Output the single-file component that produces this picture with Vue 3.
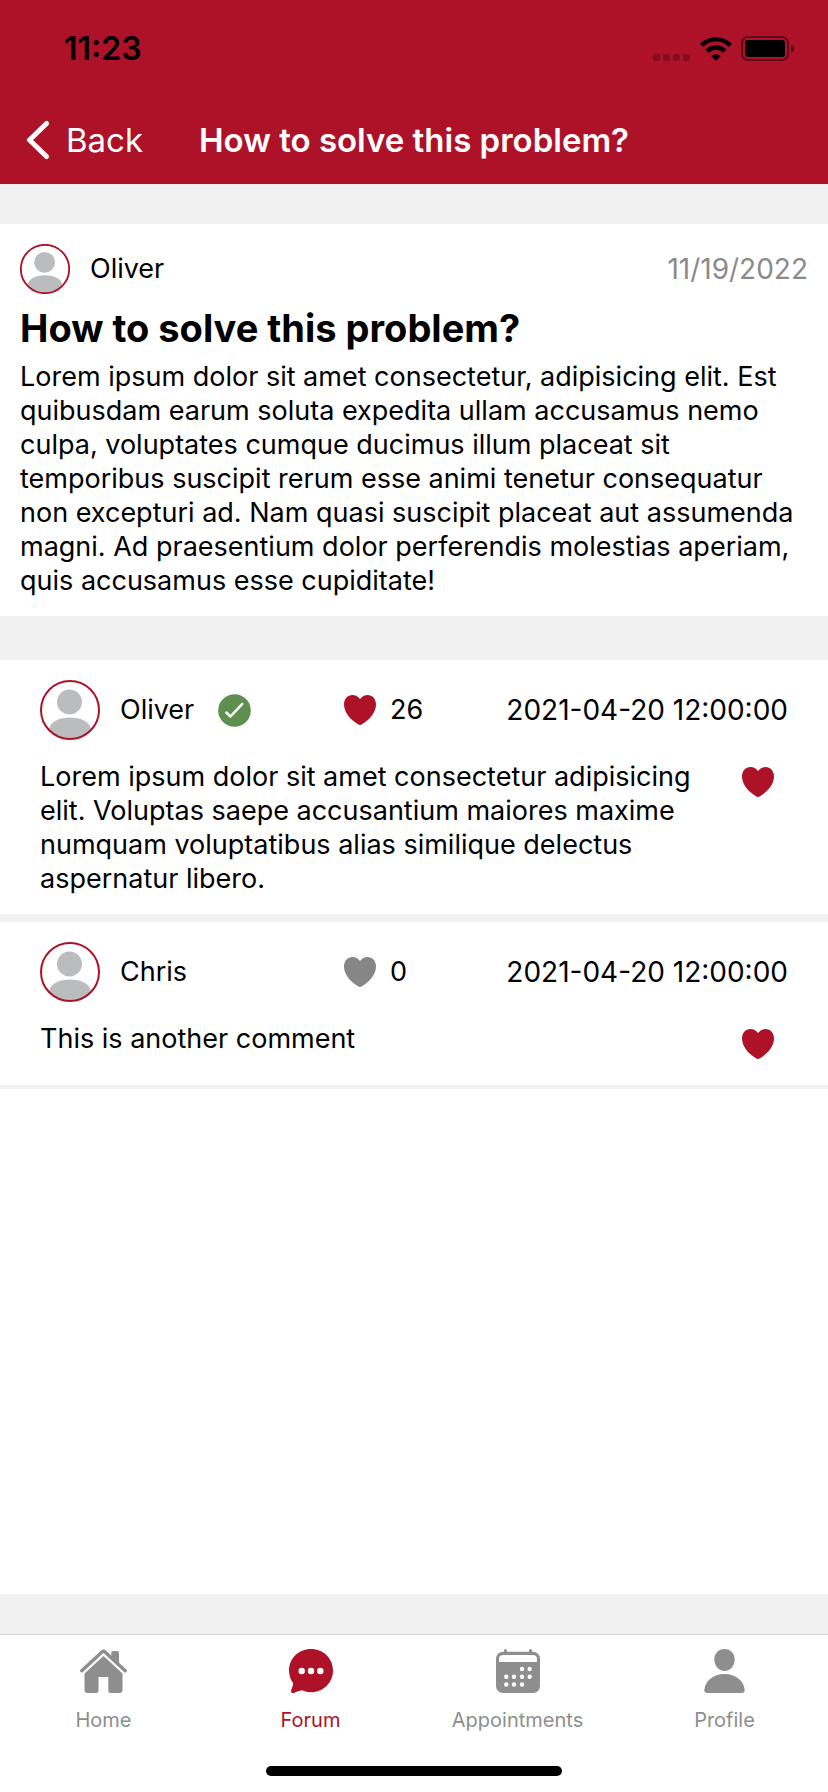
<script setup>
const post = {
  author: 'Oliver',
  date: '11/19/2022',
  title: 'How to solve this problem?',
  body: 'Lorem ipsum dolor sit amet consectetur, adipisicing elit. Est quibusdam earum soluta expedita ullam accusamus nemo culpa, voluptates cumque ducimus illum placeat sit temporibus suscipit rerum esse animi tenetur consequatur non excepturi ad. Nam quasi suscipit placeat aut assumenda magni. Ad praesentium dolor perferendis molestias aperiam, quis accusamus esse cupiditate!',
}

const comments = [
  {
    id: 1,
    author: 'Oliver',
    verified: true,
    likes: 26,
    date: '2021-04-20 12:00:00',
    text: 'Lorem ipsum dolor sit amet consectetur adipisicing elit. Voluptas saepe accusantium maiores maxime numquam voluptatibus alias similique delectus aspernatur libero.',
  },
  {
    id: 2,
    author: 'Chris',
    verified: false,
    likes: 0,
    date: '2021-04-20 12:00:00',
    text: 'This is another comment',
  },
]

const heart =
  'M16 4C14 1.5 11.5 0 8.5 0C3.5 0 0 4 0 9.5C0 18 7 25 14 29.3Q16 30.6 18 29.3C25 25 32 18 32 9.5C32 4 28.5 0 23.5 0C20.5 0 18 1.5 16 4Z'
</script>

<template>
  <div class="screen">
    <header class="top">
      <div class="status">
        <span class="time">11:23</span>
        <div class="indicators">
          <svg width="37" height="24" viewBox="0 0 37 24" aria-hidden="true">
            <g fill="#000" fill-opacity="0.25">
              <rect x="0" y="17" width="7" height="7" rx="2" />
              <rect x="10" y="17" width="7" height="7" rx="2" />
              <rect x="20" y="17" width="7" height="7" rx="2" />
              <rect x="30" y="17" width="7" height="7" rx="2" />
            </g>
          </svg>
          <svg class="wifi" width="32" height="24" viewBox="0 0 32 24" aria-hidden="true">
            <path d="M1.6 8.4A20.3 20.3 0 0 1 30.4 8.4" fill="none" stroke="#000" stroke-width="4.4" />
            <path d="M7.1 14.2A12.6 12.6 0 0 1 24.9 14.2" fill="none" stroke="#000" stroke-width="4.4" />
            <path d="M16 23.8L11.3 19.2A6.6 6.6 0 0 1 20.7 19.2Z" fill="#000" />
          </svg>
          <svg width="54" height="26" viewBox="0 0 54 26" aria-hidden="true">
            <rect x="1" y="1" width="46" height="23" rx="6" fill="none" stroke="#000" stroke-opacity="0.45" stroke-width="2" />
            <rect x="4" y="4" width="40" height="17" rx="3" fill="#000" />
            <path d="M50 8.5C54 10 54 15.5 50 17Z" fill="#000" fill-opacity="0.5" />
          </svg>
        </div>
      </div>
      <nav class="navbar">
        <button class="back" type="button">
          <svg width="24" height="40" viewBox="0 0 24 40" aria-hidden="true">
            <path d="M20.5 3.500L3.500 20L20.5 36.5" fill="none" stroke="#fff" stroke-width="5" stroke-linecap="round" stroke-linejoin="round" />
          </svg>
          <span>Back</span>
        </button>
        <h1 class="nav-title">{{ post.title }}</h1>
      </nav>
    </header>

    <main class="content">
      <article class="post">
        <div class="post-head">
          <svg class="avatar small" viewBox="0 0 60 60" aria-hidden="true">
            <clipPath id="avatar-post"><circle cx="30" cy="30" r="29" /></clipPath>
            <g clip-path="url(#avatar-post)" fill="#bbbcbe">
              <circle cx="29.5" cy="22" r="12.5" />
              <path d="M9 50C10 41 20 37.5 30 37.5S50 41 51 50V60H9Z" />
            </g>
            <circle cx="30" cy="30" r="29" fill="none" stroke="#ad1229" stroke-width="2.2" />
          </svg>
          <span>{{ post.author }}</span>
          <time class="date post-date">{{ post.date }}</time>
        </div>
        <h2 class="post-title">{{ post.title }}</h2>
        <p class="text">{{ post.body }}</p>
      </article>

      <ul class="comments">
        <li v-for="c in comments" :key="c.id" class="comment">
          <div class="comment-head">
            <div class="author">
              <svg class="avatar" viewBox="0 0 60 60" aria-hidden="true">
                <clipPath :id="'avatar-' + c.id"><circle cx="30" cy="30" r="29" /></clipPath>
                <g :clip-path="'url(#avatar-' + c.id + ')'" fill="#bbbcbe">
                  <circle cx="29.5" cy="22" r="12.5" />
                  <path d="M9 50C10 41 20 37.5 30 37.5S50 41 51 50V60H9Z" />
                </g>
                <circle cx="30" cy="30" r="29" fill="none" stroke="#ad1229" stroke-width="2" />
              </svg>
              <span>{{ c.author }}</span>
              <svg v-if="c.verified" class="badge" width="33" height="33" viewBox="0 0 33 33" role="img" aria-label="Verified">
                <circle cx="16.5" cy="16.5" r="16.3" fill="#5f8f4e" />
                <path d="M8.3 18.500L12.5 22.500L24.3 9.8" fill="none" stroke="#fff" stroke-width="2.5" stroke-linecap="round" stroke-linejoin="round" />
              </svg>
            </div>
            <div class="likes" :class="{ none: c.likes === 0 }">
              <svg width="32" height="30" viewBox="0 0 32 30" aria-hidden="true"><path :d="heart" fill="currentColor" /></svg>
              <span>{{ c.likes }}</span>
            </div>
            <time class="date">{{ c.date }}</time>
          </div>
          <div class="comment-body">
            <p class="text">{{ c.text }}</p>
            <button class="like" type="button" aria-label="Like comment">
              <svg width="32" height="30" viewBox="0 0 32 30" aria-hidden="true"><path :d="heart" fill="currentColor" /></svg>
            </button>
          </div>
        </li>
      </ul>
    </main>

    <footer class="bottom">
      <nav class="tabs">
        <a class="tab" href="#home">
          <svg width="47" height="44" viewBox="0 0 47 44" aria-hidden="true">
            <path d="M31.3 10V3.5Q31.3 2 32.8 2H37.5Q39 2 39 3.5V16Z" fill="currentColor" />
            <path d="M1.8 21.8L22 3Q23.5 1.6 25 3L45.2 21.8" fill="none" stroke="currentColor" stroke-width="3.4" stroke-linecap="round" />
            <path d="M23.5 7L42.5 24.5V41Q42.5 44 39.5 44H31Q28.3 44 28.3 41.5V28H18.5V41.5Q18.5 44 16 44H7.5Q4.5 44 4.5 41V24.5Z" fill="currentColor" />
          </svg>
          <span>Home</span>
        </a>
        <a class="tab active" href="#forum" aria-current="page">
          <svg width="44" height="44" viewBox="0 0 44 44" aria-hidden="true">
            <path d="M22 0C34.5 0 44 9.5 44 21.5S34.5 43.3 22 43.3C18.8 43.3 15.8 42.5 13 41.3C10.5 41.7 7.5 43 5 43.9C3 44.4 1.7 43.2 2.2 41C3 38.5 4.3 36.5 4 34C1.5 30.5 0 26 0 21.5C0 9.5 9.5 0 22 0Z" fill="currentColor" />
            <g fill="#fff"><circle cx="12.7" cy="22" r="3.2" /><circle cx="22" cy="22" r="3.2" /><circle cx="31.3" cy="22" r="3.2" /></g>
          </svg>
          <span>Forum</span>
        </a>
        <a class="tab" href="#appointments">
          <svg width="44" height="44" viewBox="0 0 44 44" aria-hidden="true">
            <g fill="currentColor">
              <rect x="8" y="0" width="3" height="6" rx="1.5" />
              <rect x="33" y="0" width="3" height="6" rx="1.5" />
              <rect x="0" y="2.7" width="44" height="41.3" rx="7" />
            </g>
            <g fill="#fff">
              <path d="M3 13V10Q3 6 7.500 6H36.5Q41 6 41 10V13Z" />
              <circle cx="26" cy="20" r="2.2" /><circle cx="33.7" cy="20" r="2.2" />
              <circle cx="10.3" cy="27.7" r="2.2" /><circle cx="18" cy="27.7" r="2.2" /><circle cx="26" cy="27.7" r="2.2" /><circle cx="33.7" cy="27.7" r="2.2" />
              <circle cx="10.3" cy="35.5" r="2.2" /><circle cx="18" cy="35.5" r="2.2" /><circle cx="26" cy="35.5" r="2.2" />
            </g>
          </svg>
          <span>Appointments</span>
        </a>
        <a class="tab" href="#profile">
          <svg width="41" height="44" viewBox="0 0 41 44" aria-hidden="true">
            <g fill="currentColor">
              <path d="M20.5 0C26.5 0 30.7 4.5 30.7 10.3C30.7 16.5 26.5 22 20.5 22S10.3 16.5 10.3 10.3C10.3 4.5 14.5 0 20.5 0Z" />
              <path d="M20.5 25C32 25 40 32 40.7 41Q40.8 44 37.5 44H3.500Q0.2 44 0.3 41C1 32 9 25 20.5 25Z" />
            </g>
          </svg>
          <span>Profile</span>
        </a>
      </nav>
      <div class="home-indicator"></div>
    </footer>
  </div>
</template>

<style>
body {
  margin: 0;
}
</style>

<style scoped>
.screen {
  display: flex;
  flex-direction: column;
  min-height: 100vh;
  background: #fff;
  color: #000;
  font-family: Inter, "Liberation Sans", sans-serif;
  font-size: 27px;
  line-height: 34px;
}

svg {
  display: block;
  flex: none;
}

button {
  padding: 0;
  border: 0;
  background: none;
  font: inherit;
  cursor: pointer;
}

.top {
  background: #ad1229;
}

.status {
  display: flex;
  align-items: center;
  justify-content: space-between;
  height: 98px;
  padding: 0 33px 0 64px;
}

.time {
  font-size: 32px;
  font-weight: 600;
}

.indicators {
  display: flex;
  align-items: center;
}

.wifi {
  margin: 0 9px 0 10px;
}

.navbar {
  display: grid;
  grid-template-columns: 1fr auto 1fr;
  align-items: center;
  padding: 22px 26px 24px;
  color: #fff;
  font-size: 33px;
  line-height: 40px;
}

.back {
  display: flex;
  align-items: center;
  justify-self: start;
  gap: 16px;
  color: #fff;
}

.nav-title {
  margin: 0;
  font-size: 33px;
  font-weight: 600;
}

.content {
  flex: 1;
  border: solid #f1f1f1;
  border-width: 40px 0;
}

.post {
  padding: 20px 20px 18px;
  border-bottom: 40px solid #f1f1f1;
}

.post-head {
  display: flex;
  align-items: center;
  gap: 20px;
}

.avatar {
  width: 60px;
  height: 60px;
}

.avatar.small {
  width: 50px;
  height: 50px;
}

.date {
  font-size: 28px;
}

.post-date {
  margin-left: auto;
  color: #8a8a8a;
}

.post-title {
  margin: 10px 0 8px;
  font-size: 38px;
  font-weight: 700;
  line-height: 48px;
}

.text {
  margin: 0;
}

.comments {
  margin: 0;
  padding: 0;
  list-style: none;
}

.comment {
  padding: 20px 40px 18px;
  border: solid #f1f1f1;
  border-width: 4px 0;
}

.comment-head {
  display: grid;
  grid-template-columns: 304px 1fr auto;
  align-items: center;
}

.author {
  display: flex;
  align-items: center;
  gap: 20px;
}

.badge {
  margin-left: 4px;
}

.likes {
  display: flex;
  align-items: center;
  gap: 14px;
}

.likes svg {
  color: #ad1229;
}

.likes.none svg {
  color: #868686;
}

.comment-body {
  display: flex;
  align-items: flex-start;
  gap: 16px;
  padding-top: 20px;
}

.comment-body .text {
  flex: 1;
}

.like {
  display: flex;
  justify-content: center;
  width: 60px;
  padding: 7px 0 8px;
  color: #ad1229;
}

.bottom {
  border-top: 1px solid #d5d5d5;
}

.tabs {
  display: grid;
  grid-template-columns: repeat(4, 1fr);
  padding-top: 14px;
}

.tab {
  display: flex;
  flex-direction: column;
  align-items: center;
  gap: 15px;
  color: #8e8e8e;
  font-size: 20px;
  line-height: 24px;
  text-decoration: none;
}

.tab.active {
  color: #ad1229;
}

.home-indicator {
  width: 296px;
  height: 10px;
  margin: 34px auto 16px;
  border-radius: 5px;
  background: #000;
}
</style>
